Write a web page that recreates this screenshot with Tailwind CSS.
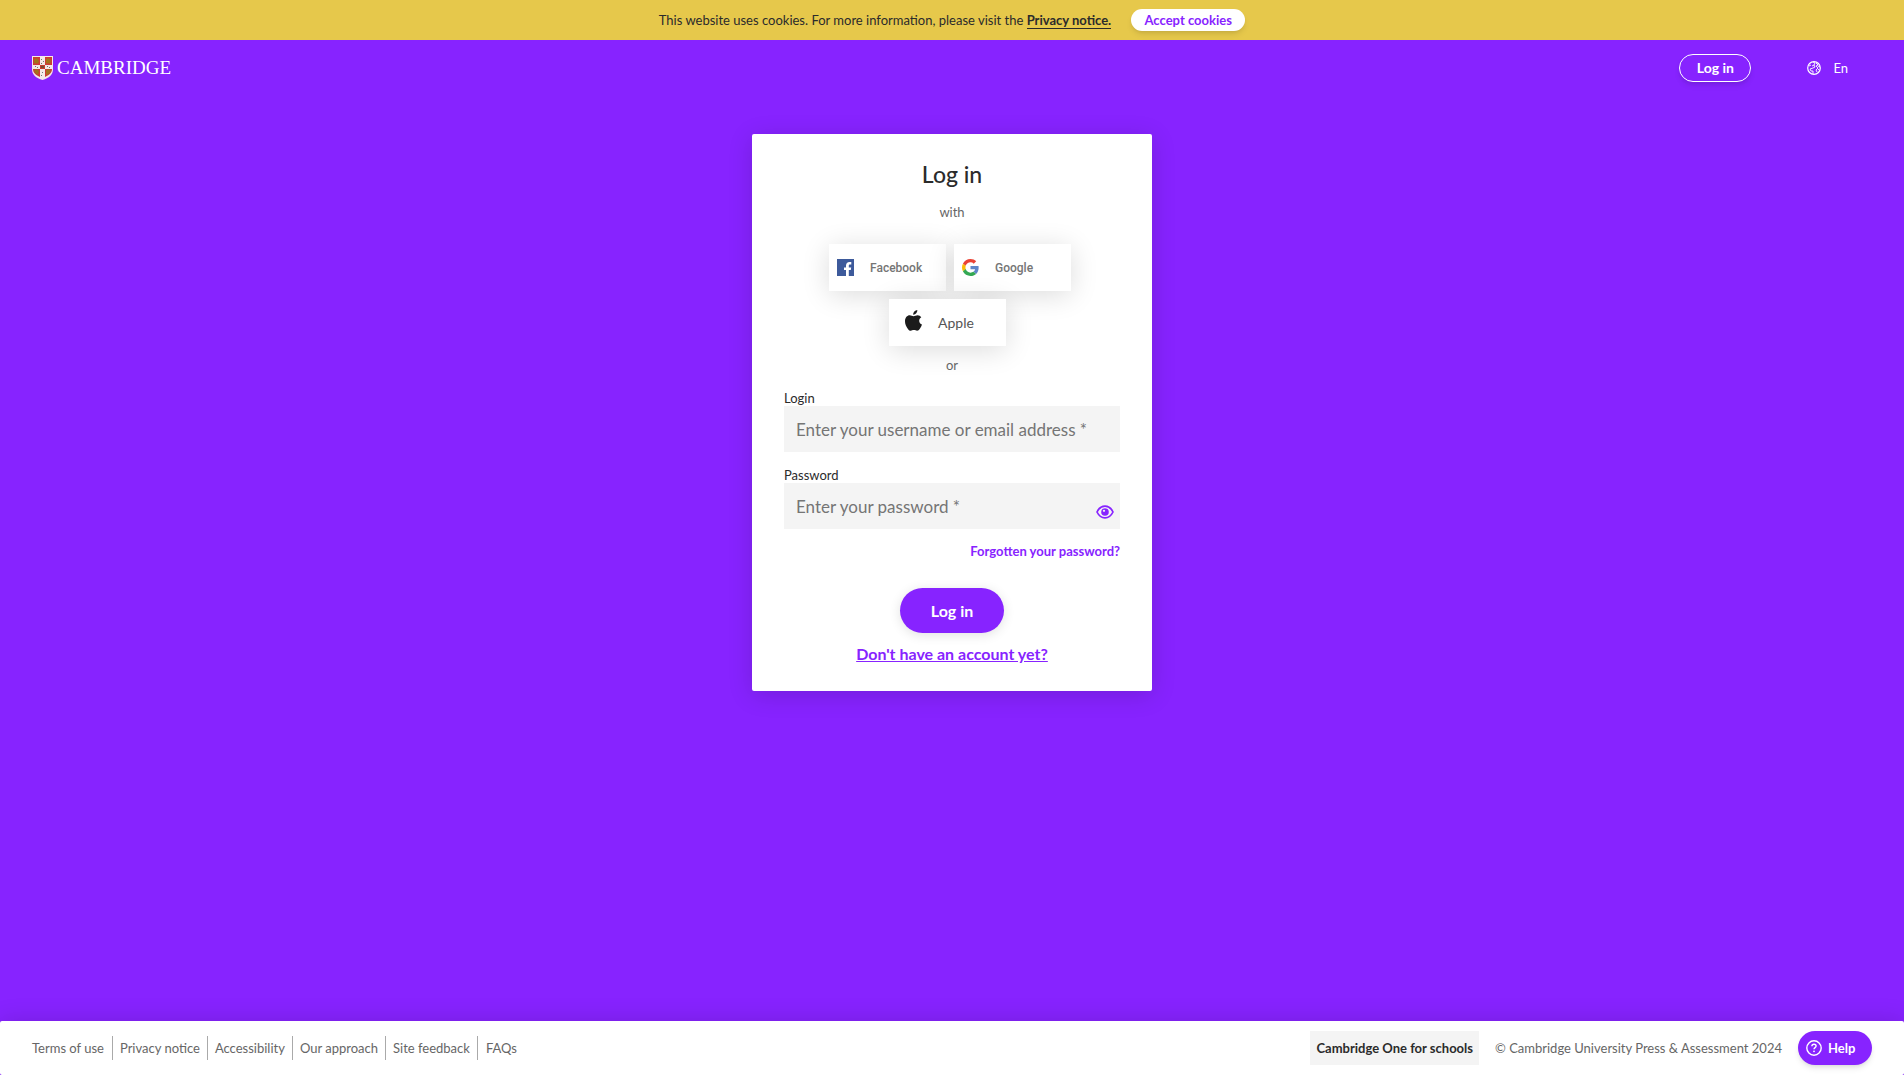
<!DOCTYPE html>
<html lang="en">
<head>
<meta charset="utf-8">
<meta name="viewport" content="width=device-width, initial-scale=1">
<title>Log in | Cambridge</title>
<script src="https://cdn.jsdelivr.net/npm/@tailwindcss/browser@4"></script>
</head>
<body class="flex min-h-screen flex-col bg-[#8723ff] font-['Lato','Open_Sans',sans-serif] text-[13px] leading-4 text-[#2b2b2b]">

<aside class="flex h-10 items-center justify-center gap-5 bg-[#e6c84b]" aria-label="Cookie notice">
  <p>This website uses cookies. For more information, please visit the <a href="#" class="border-b border-[#2b2b2b] font-bold">Privacy notice.</a></p>
  <button type="button" class="h-[22px] w-[114px] rounded-full bg-white font-bold text-[#8723ff] shadow-md shadow-black/10">Accept cookies</button>
</aside>

<header class="flex h-14 items-center justify-between pr-14 pl-8">
  <a href="#" class="flex items-center gap-1 text-white" aria-label="Cambridge home">
    <svg class="h-6 w-[21px]" viewBox="0 0 21 24" aria-hidden="true">
      <path d="M0 0h21v13c0 6-4 9-10.500 11C4 22 0 19 0 13z" fill="#f3e9e7"/>
      <path d="M1 1h7v8H1zM13 1h7v8h-7zM1 13h7v8C4 19 1 17 1 13zM13 13h7c0 4-3 6-7 8z" fill="#cf3a35"/>
      <path d="M2 3l2-1 2 1 1 2-1 3-2-1-2 1zM14 3l2-1 2 1 1 2-1 3-2-1-2 1zM2 14l3-1 2 2-1 4-3-2zM14 14l3-1 2 2-2 3-3 1z" fill="#a2711c"/>
      <path d="M9 3h1v1H9zM11 5h1v1h-1zM9 7h1v1H9zM3 10h1v1H3zM5 11h1v1H5zM15 10h1v1h-1zM17 11h1v1h-1zM10 16h1v1h-1zM9 19h1v1H9z" fill="#777"/>
      <path d="M8 9h5v4H8z" fill="#c43c2d"/><path d="M9 10h3v2H9z" fill="#754b33"/>
    </svg>
    <span class="font-['Liberation_Serif',serif] text-[19px] leading-6">CAMBRIDGE</span>
  </a>
  <div class="flex items-center gap-14 text-white">
    <button type="button" class="h-7 w-[72px] rounded-full border border-white text-sm leading-4 font-bold shadow-md shadow-black/10">Log in</button>
    <button type="button" class="flex items-center gap-3">
      <svg class="size-[14px]" viewBox="0 0 14 14" fill="none" stroke="currentColor" aria-hidden="true">
        <circle cx="7" cy="7" r="6.300" stroke-width="1.200"/>
        <path d="M6 1l2 1-1 2-2 1M7 4l1 2-2 1-3 1 1 2 2 0v3M2 5l2-1M9 2l2 2-2 1 2 2-2 2 1 2M11 5l2 1M11 8l1 1" stroke-width=".9"/>
      </svg>
      <span>En</span>
    </button>
  </div>
</header>

<main class="flex flex-1 justify-center px-4 pt-[38px] pb-10">
  <section class="w-full max-w-[400px] self-start rounded-xs bg-white px-8 pt-[26px] pb-[27px] shadow-[0_4px_24px_rgba(0,0,0,0.15)]">
    <h1 class="text-center text-[23px] leading-7 font-medium">Log in</h1>
    <p class="mt-4 text-center text-[#666]">with</p>
    <div class="mt-6 flex justify-center gap-2 pr-1 font-['Roboto',sans-serif] text-xs font-medium text-[#757575]">
      <button type="button" class="flex h-[47px] w-[117px] items-center gap-4 bg-white pl-2 shadow-[0_4px_28px_rgba(0,0,0,0.14)]">
        <svg class="size-[17px]" viewBox="0 0 17 17" aria-hidden="true"><path d="M0 0h17v17H0z" fill="#3d5a9b"/><path d="M9 17v-6H7V8.400h2V6.700C9 4.500 10.300 3 12.600 3c.8 0 1.500.1 1.700.1v2.400h-1.200c-1 0-1.300.5-1.300 1.300v1.600h2.400l-.4 2.600h-2v6z" fill="#fff"/></svg>
        Facebook
      </button>
      <button type="button" class="flex h-[47px] w-[117px] items-center gap-4 bg-white pl-2 shadow-[0_4px_28px_rgba(0,0,0,0.14)]">
        <svg class="size-[17px]" viewBox="0 0 48 48" aria-hidden="true"><path fill="#ea4335" d="M24 9.500c3.540 0 6.710 1.220 9.210 3.600l6.850-6.850C35.900 2.380 30.470 0 24 0 14.620 0 6.510 5.380 2.560 13.220l7.980 6.190C12.430 13.720 17.740 9.500 24 9.500z"/><path fill="#5f86c9" d="M46.980 24.550c0-1.570-.15-3.090-.38-4.550H24v9.020h12.940c-.58 2.960-2.260 5.480-4.780 7.180l7.730 6c4.510-4.180 7.090-10.360 7.090-17.650z"/><path fill="#fbbc05" d="M10.530 28.590A14.500 14.500 0 0 1 9.770 24c0-1.600.27-3.140.76-4.590l-7.980-6.190A24 24 0 0 0 0 24c0 3.880.92 7.540 2.560 10.780z"/><path fill="#34a853" d="M24 48c6.480 0 11.930-2.130 15.890-5.810l-7.730-6c-2.150 1.450-4.920 2.300-8.160 2.300-6.260 0-11.570-4.220-13.470-9.910l-7.980 6.190C6.510 42.620 14.620 48 24 48z"/></svg>
        Google
      </button>
    </div>
    <div class="mt-2 flex justify-center pr-[9px]">
      <button type="button" class="flex h-[47px] w-[117px] items-center gap-4 bg-white pl-4 text-sm text-[#555] shadow-[0_4px_28px_rgba(0,0,0,0.14)]">
        <svg class="mb-1 h-[21px] w-[17px]" viewBox="0 0 17 21" fill="#1b1b1b" aria-hidden="true"><path d="M12.300 0c.1 1.300-.4 2.400-1.100 3.300-.8.900-1.800 1.500-3 1.400-.1-1.200.4-2.400 1.100-3.200C10.100.6 11.300.1 12.300 0zM16.300 7.200c-1.400.9-2.100 2-2.100 3.500 0 1.800 1 3.200 2.800 3.900-.4 1.400-1.100 2.700-2 4-1 1.400-1.800 2.200-2.900 2.200-1.200 0-1.700-.7-3.200-.7s-2 .7-3.200.7c-1.200 0-2.200-1-3.100-2.400C1 16.200 0 13.800 0 11.200 0 7.500 2.200 5.300 4.700 5.300c1.600 0 2.600.9 3.900.9 1.200 0 2.400-1 4.100-1 1.400 0 2.700.7 3.600 2z"/></svg>
        Apple
      </button>
    </div>
    <p class="mt-[11px] text-center text-[#666]">or</p>

    <form class="mt-[17px] flex flex-col">
      <label for="login" class="leading-4">Login</label>
      <input id="login" type="text" placeholder="Enter your username or email address *" class="h-[46px] w-full bg-[#f4f4f4] px-3 text-[17px] outline-none placeholder:text-[#757575]">
      <label for="password" class="mt-[15px] leading-4">Password</label>
      <div class="relative">
        <input id="password" type="password" placeholder="Enter your password *" class="h-[46px] w-full bg-[#f4f4f4] pr-8 pl-3 text-[17px] outline-none placeholder:text-[#757575]">
        <button type="button" aria-label="Show password" class="absolute right-[6px] bottom-[10px]">
          <svg class="h-[14px] w-[18px]" viewBox="0 0 18 14" aria-hidden="true"><path d="M1 7c1.800-3.700 4.600-5.800 8-5.800S15.200 3.300 17 7c-1.800 3.700-4.600 5.800-8 5.800S2.800 10.700 1 7z" fill="#f4f4f4" stroke="#8723ff" stroke-width="1.700"/><circle cx="9" cy="7" r="3.800" fill="#8723ff"/><circle cx="8" cy="5.800" r="1.100" fill="#f4f4f4"/></svg>
        </button>
      </div>
      <a href="#" class="mt-[14px] self-end font-bold text-[#8723ff]">Forgotten your password?</a>
      <button type="submit" class="mt-[29px] h-[45px] w-[104px] self-center rounded-full bg-[#8723ff] text-base font-bold text-white shadow-[0_2px_12px_rgba(0,0,0,0.12)]">Log in</button>
      <a href="#" class="mt-[11px] self-center text-base leading-5 font-bold text-[#8723ff] underline">Don't have an account yet?</a>
    </form>
  </section>
</main>

<footer class="flex min-h-[54px] items-center justify-between rounded-xs bg-white px-8 text-[#666] shadow-[0_0_24px_rgba(0,0,0,0.15)]">
  <nav aria-label="Footer">
    <ul class="flex items-center divide-x divide-[#aaa] leading-6">
      <li class="pr-2"><a href="#">Terms of use</a></li>
      <li class="px-[7px]"><a href="#">Privacy notice</a></li>
      <li class="px-[7px]"><a href="#">Accessibility</a></li>
      <li class="px-[7px]"><a href="#">Our approach</a></li>
      <li class="px-[7px]"><a href="#">Site feedback</a></li>
      <li class="pl-2"><a href="#">FAQs</a></li>
    </ul>
  </nav>
  <div class="flex items-center">
    <a href="#" class="mr-4 bg-[#f4f4f4] px-[6px] leading-[34px] font-bold text-[#2b2b2b]">Cambridge One for schools</a>
    <p class="mr-4">© Cambridge University Press &amp; Assessment 2024</p>
    <button type="button" class="flex h-[34px] w-[74px] items-center gap-[6px] rounded-full bg-[#8723ff] pl-2 font-bold text-white shadow-md shadow-black/10">
      <svg class="size-4" viewBox="0 0 16 16" fill="none" stroke="currentColor" aria-hidden="true"><circle cx="8" cy="8" r="7.200" stroke-width="1.400"/><path d="M5.900 6.300c0-1.300.9-2.100 2.100-2.100s2.100.8 2.100 1.900c0 1.500-2.100 1.500-2.100 3.100" stroke-width="1.400"/><circle cx="8" cy="11.300" r=".9" fill="currentColor" stroke="none"/></svg>
      Help
    </button>
  </div>
</footer>
</body>
</html>
